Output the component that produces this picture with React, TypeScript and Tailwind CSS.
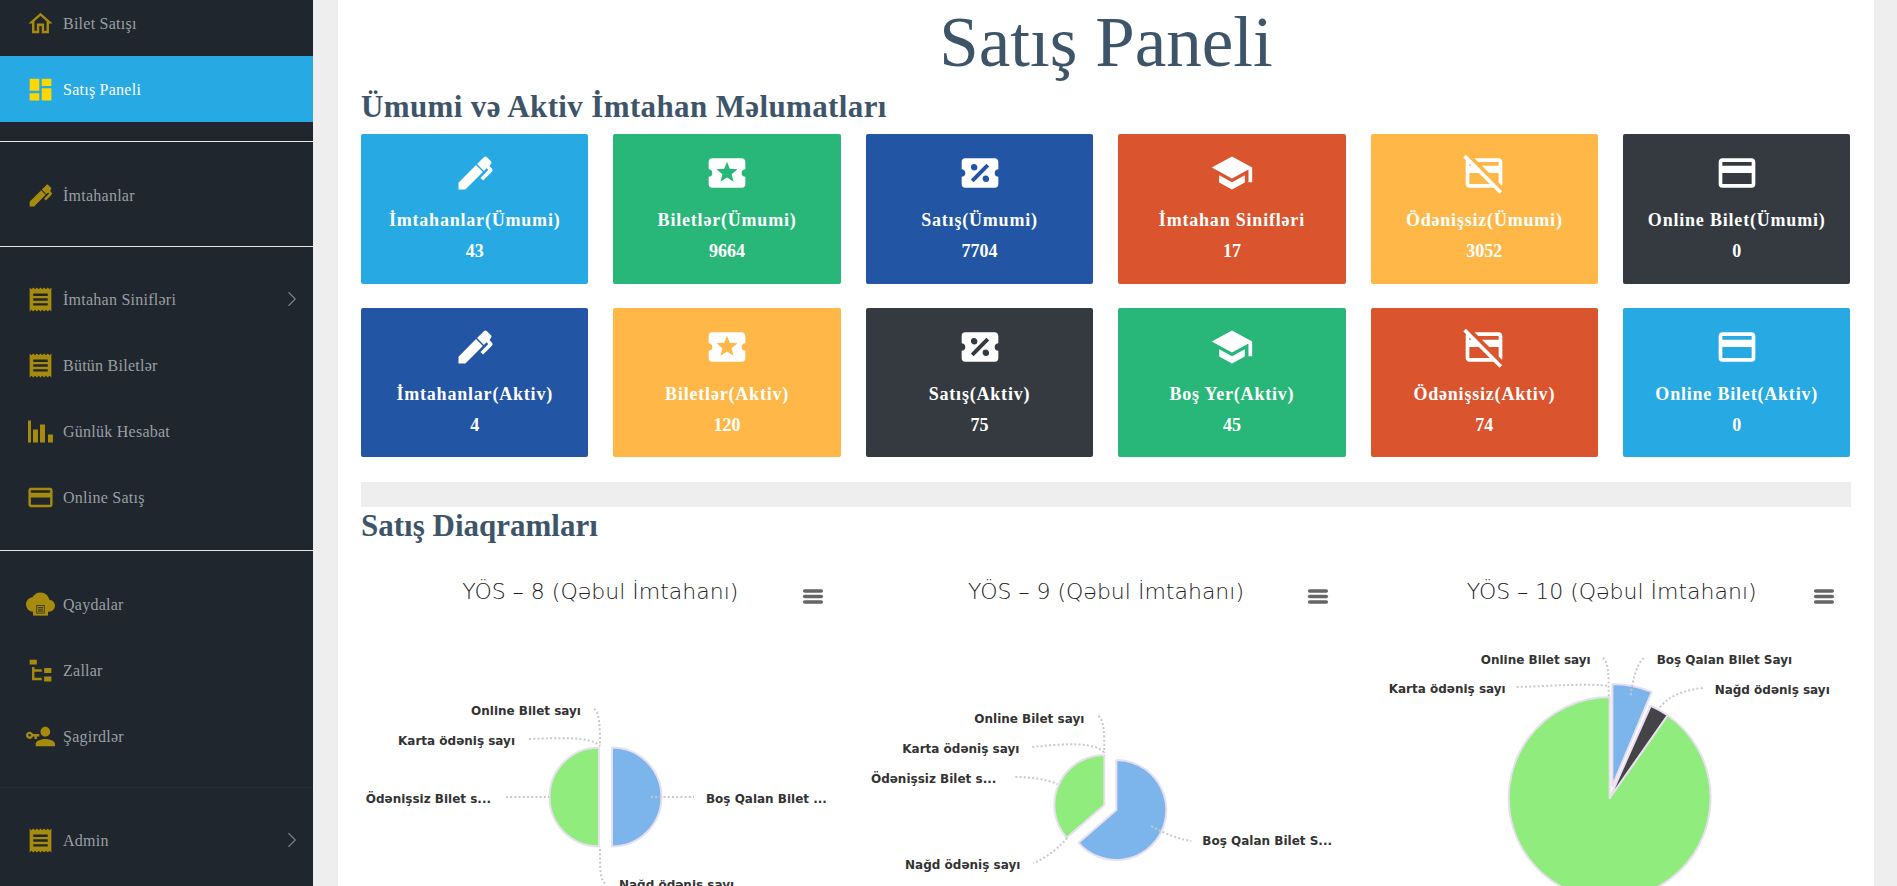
import type { ReactNode } from "react";
import { MdOutlineCreditCardOff } from "react-icons/md";
import { ChevronRight } from "lucide-react";

// mdi paths
const P = {
  home: "M12,5.69L17,10.19V18H15V12H9V18H7V10.19L12,5.69M12,3L2,12H5V20H11V14H13V20H19V12H22L12,3Z",
  dash: "M13,3V9H21V3M13,21H21V11H13M3,21H11V15H3M3,13H11V3H3V13Z",
  pen: "M20.71,7.04C20.37,7.38 20.04,7.71 20.03,8.04C20,8.36 20.34,8.69 20.66,9C21.14,9.5 21.61,9.95 21.59,10.44C21.57,10.93 21.06,11.44 20.55,11.94L16.42,16.08L15,14.66L19.25,10.42L18.29,9.46L16.87,10.87L13.12,7.12L16.96,3.29C17.35,2.9 18,2.9 18.37,3.29L20.71,5.63C21.1,6 21.1,6.65 20.71,7.04M3,17.25L12.56,7.68L16.31,11.43L6.75,21H3V17.25Z",
  receipt: "M3,22L4.5,20.5L6,22L7.5,20.5L9,22L10.5,20.5L12,22L13.5,20.5L15,22L16.5,20.5L18,22L19.5,20.5L21,22V2L19.5,3.5L18,2L16.5,3.5L15,2L13.5,3.5L12,2L10.5,3.5L9,2L7.5,3.5L6,2L4.5,3.5L3,2M18,9H6V7H18M18,13H6V11H18M18,17H6V15H18V17Z",
  card: "M20,8H4V6H20M20,18H4V12H20M20,4H4C2.89,4 2,4.89 2,6V18A2,2 0 0,0 4,20H20A2,2 0 0,0 22,18V6C22,4.89 21.1,4 20,4Z",
  tree: "M3,3H9V7H3V3M15,10H21V14H15V10M15,17H21V21H15V17M13,13H7V18H13V20H7L5,20V9H7V11H13V13Z",
  key: "M11 10V12H9V14H7V12H5.8C5.4 13.2 4.3 14 3 14C1.3 14 0 12.7 0 11S1.3 8 3 8C4.3 8 5.4 8.8 5.8 10H11M3 10C2.4 10 2 10.4 2 11S2.4 12 3 12 4 11.6 4 11 3.6 10 3 10M16 14C18.7 14 24 15.3 24 18V20H8V18C8 15.3 13.3 14 16 14M16 12C13.8 12 12 10.2 12 8S13.8 4 16 4 20 5.8 20 8 18.2 12 16 12Z",
  bars: "M1.65,2.9H4.1V21.1H1.65ZM5.8,10.3H9.9V21.1H5.8ZM11.6,6.2H15.7V21.1H11.6ZM18.2,14.5H22.3V21.1H18.2Z",
  cloud: "M19.35,10.04C18.67,6.59 15.64,4 12,4C9.11,4 6.6,5.64 5.35,8.04C2.34,8.36 0,10.91 0,14A6,6 0 0,0 6,20H4V20H20V20H19A5,5 0 0,0 24,15C24,12.36 21.95,10.22 19.35,10.04Z",
  star: "M15.58,16.8L12,14.5L8.42,16.8L9.5,12.68L6.21,10L10.46,9.74L12,5.8L13.54,9.74L17.79,10L14.5,12.68M20,12C20,10.89 20.9,10 22,10V6C22,4.89 21.1,4 20,4H4A2,2 0 0,0 2,6V10C3.11,10 4,10.9 4,12A2,2 0 0,1 2,14V18A2,2 0 0,0 4,20H20A2,2 0 0,0 22,18V14A2,2 0 0,1 20,12Z",
  percent: "M4,4A2,2 0 0,0 2,6V10C3.11,10 4,10.9 4,12A2,2 0 0,1 2,14V18A2,2 0 0,0 4,20H20A2,2 0 0,0 22,18V14A2,2 0 0,1 20,12C20,10.89 20.9,10 22,10V6C22,4.89 21.1,4 20,4H4M15.5,7L17,8.5L8.5,17L7,15.5L15.5,7M8.81,7.04C9.79,7.04 10.58,7.83 10.58,8.81A1.77,1.77 0 0,1 8.81,10.58C7.83,10.58 7.04,9.79 7.04,8.81A1.77,1.77 0 0,1 8.81,7.04M15.19,13.42C16.17,13.42 16.96,14.21 16.96,15.19A1.77,1.77 0 0,1 15.19,16.96C14.21,16.96 13.42,16.17 13.42,15.19A1.77,1.77 0 0,1 15.19,13.42Z",
  school: "M12,3L1,9L12,15L21,10.09V17H23V9M5,13.18V17.18L12,21L19,17.18V13.18L12,17L5,13.18Z",
};

function Icon({ d, className }: { d: string; className: string }) {
  return (
    <svg viewBox="0 0 24 24" className={className} fill="currentColor" fillRule="evenodd">
      <path d={d} />
    </svg>
  );
}

function CloudIcon({ className }: { className: string }) {
  return (
    <svg viewBox="0 0 24 24" className={className} fill="currentColor">
      <path d={P.cloud} transform="translate(0 -2)" />
      <rect x="5.8" y="15" width="12.4" height="6.2" />
      <rect x="8.6" y="12.4" width="6.8" height="7" fill="#1f262d" />
      <rect x="9.2" y="13" width="5.6" height="5.8" fill="#a68b0f" />
      <path d="M9.8 14h4.4v.7H9.8zM9.8 15.5h4.4v.7H9.8zM9.8 17h4.4v.7H9.8z" fill="#1f262d" />
    </svg>
  );
}

function NavRow({
  label,
  icon,
  active,
  chevron,
}: {
  label: string;
  icon: ReactNode;
  active?: boolean;
  chevron?: boolean;
}) {
  return (
    <div
      className={`flex h-[66px] items-center pr-[8px] pl-[26px] ${
        active ? "bg-[#27a9e3] text-white" : "text-[#9b9fa3]"
      }`}
    >
      <span className={`flex w-[29px] justify-center ${active ? "text-[#ffd700]" : "text-[#a68b0f]"}`}>{icon}</span>
      <span className="ml-[8px] flex-1 pt-[2px] text-[16px] font-light tracking-[0.25px]">{label}</span>
      {chevron && <ChevronRight className="size-[26px] text-[#7c8087]" strokeWidth={1} />}
    </div>
  );
}

function Sidebar() {
  const ic = "size-[29px] shrink-0";
  return (
    <aside className="-mt-[10px] w-[313px] shrink-0 bg-[#1f262d] font-['Liberation_Serif',serif]">
      <NavRow label="Bilet Satışı" icon={<Icon d={P.home} className={ic} />} />
      <NavRow label="Satış Paneli" active icon={<Icon d={P.dash} className={ic} />} />
      <hr className="mt-[19px] mb-[20px] border-t border-[#e8e8e8]" />
      <NavRow label="İmtahanlar" icon={<Icon d={P.pen} className={ic} />} />
      <hr className="mt-[18px] mb-[19px] border-t border-[#e8e8e8]" />
      <NavRow label="İmtahan Sinifləri" chevron icon={<Icon d={P.receipt} className={ic} />} />
      <NavRow label="Bütün Biletlər" icon={<Icon d={P.receipt} className={ic} />} />
      <NavRow label="Günlük Hesabat" icon={<Icon d={P.bars} className={ic} />} />
      <NavRow label="Online Satış" icon={<Icon d={P.card} className={ic} />} />
      <hr className="my-[20px] border-t border-[#e8e8e8]" />
      <NavRow label="Qaydalar" icon={<CloudIcon className={ic} />} />
      <NavRow label="Zallar" icon={<Icon d={P.tree} className={ic} />} />
      <NavRow label="Şagirdlər" icon={<Icon d={P.key} className={ic} />} />
      <hr className="mt-[18px] mb-[19px] border-t border-[#262d35]" />
      <NavRow label="Admin" chevron icon={<Icon d={P.receipt} className={ic} />} />
    </aside>
  );
}

const cardIcon = "size-[44px]";

const cards = [
  { t: "İmtahanlar(Ümumi)", v: "43", bg: "bg-[#27a9e3]", i: <Icon d={P.pen} className={cardIcon} /> },
  { t: "Biletlər(Ümumi)", v: "9664", bg: "bg-[#28b779]", i: <Icon d={P.star} className={cardIcon} /> },
  { t: "Satış(Ümumi)", v: "7704", bg: "bg-[#2255a4]", i: <Icon d={P.percent} className={cardIcon} /> },
  { t: "İmtahan Sinifləri", v: "17", bg: "bg-[#da542e]", i: <Icon d={P.school} className={cardIcon} /> },
  { t: "Ödənişsiz(Ümumi)", v: "3052", bg: "bg-[#ffb848]", i: <MdOutlineCreditCardOff className={cardIcon} /> },
  { t: "Online Bilet(Ümumi)", v: "0", bg: "bg-[#343a40]", i: <Icon d={P.card} className={cardIcon} /> },
  { t: "İmtahanlar(Aktiv)", v: "4", bg: "bg-[#2255a4]", i: <Icon d={P.pen} className={cardIcon} /> },
  { t: "Biletlər(Aktiv)", v: "120", bg: "bg-[#ffb848]", i: <Icon d={P.star} className={cardIcon} /> },
  { t: "Satış(Aktiv)", v: "75", bg: "bg-[#343a40]", i: <Icon d={P.percent} className={cardIcon} /> },
  { t: "Boş Yer(Aktiv)", v: "45", bg: "bg-[#28b779]", i: <Icon d={P.school} className={cardIcon} /> },
  { t: "Ödənişsiz(Aktiv)", v: "74", bg: "bg-[#da542e]", i: <MdOutlineCreditCardOff className={cardIcon} /> },
  { t: "Online Bilet(Aktiv)", v: "0", bg: "bg-[#27a9e3]", i: <Icon d={P.card} className={cardIcon} /> },
];

function wedge(cx: number, cy: number, r: number, a0: number, a1: number) {
  const pt = (a: number) => {
    const rad = (a * Math.PI) / 180;
    return `${cx + r * Math.sin(rad)} ${cy - r * Math.cos(rad)}`;
  };
  const large = a1 - a0 > 180 ? 1 : 0;
  return `M${cx} ${cy}L${pt(a0)}A${r} ${r} 0 ${large} 1 ${pt(a1)}Z`;
}

type Slice = { c: string; x: number; y: number; r: number; a0: number; a1: number };
type Label = { t: string; x: number; y: number; end?: boolean };

// coordinates are page pixels, each svg's viewBox starts at the chart's own corner
const charts: { title: string; x0: number; slices: Slice[]; labels: Label[]; lines: string[] }[] = [
  {
    title: "YÖS – 8 (Qəbul İmtahanı)",
    x0: 361,
    slices: [
      { c: "#7cb5ec", x: 612, y: 796, r: 49.5, a0: 0, a1: 180 },
      { c: "#90ed7d", x: 599, y: 796, r: 49.5, a0: 180, a1: 359.99 },
    ],
    labels: [
      { t: "Online Bilet sayı", x: 581, y: 714, end: true },
      { t: "Karta ödəniş sayı", x: 515, y: 744, end: true },
      { t: "Ödənişsiz Bilet s...", x: 491, y: 802, end: true },
      { t: "Boş Qalan Bilet ...", x: 706, y: 802 },
      { t: "Nağd ödəniş sayı", x: 619, y: 888 },
    ],
    lines: [
      "M594 708C600 710 600 730 600 745",
      "M529 738C560 737 590 735 600 745",
      "M506 796H549",
      "M651 796H694",
      "M600 848C600 870 600 878 606 884",
    ],
  },
  {
    title: "YÖS – 9 (Qəbul İmtahanı)",
    x0: 866.67,
    slices: [
      { c: "#7cb5ec", x: 1116, y: 809, r: 50, a0: 0, a1: 229 },
      { c: "#90ed7d", x: 1104, y: 804, r: 50, a0: 229, a1: 359.99 },
    ],
    labels: [
      { t: "Online Bilet sayı", x: 1084, y: 722, end: true },
      { t: "Karta ödəniş sayı", x: 1019, y: 752, end: true },
      { t: "Ödənişsiz Bilet s...", x: 996, y: 782, end: true },
      { t: "Boş Qalan Bilet S...", x: 1202, y: 844 },
      { t: "Nağd ödəniş sayı", x: 1020, y: 868, end: true },
    ],
    lines: [
      "M1098 715C1104 718 1104 735 1104 752",
      "M1032 746C1060 743 1095 740 1104 752",
      "M1015 776C1030 776 1045 778 1057 783",
      "M1151 825C1165 833 1178 838 1191 840",
      "M1067 837C1055 850 1045 857 1033 862",
    ],
  },
  {
    title: "YÖS – 10 (Qəbul İmtahanı)",
    x0: 1372.33,
    slices: [
      { c: "#90ed7d", x: 1610, y: 797, r: 101, a0: 35, a1: 359.99 },
      { c: "#434348", x: 1610, y: 797, r: 101, a0: 24, a1: 35 },
      { c: "#7cb5ec", x: 1612.7, y: 785, r: 102, a0: 0, a1: 22.7 },
    ],
    labels: [
      { t: "Online Bilet sayı", x: 1591, y: 663, end: true },
      { t: "Karta ödəniş sayı", x: 1506, y: 692, end: true },
      { t: "Boş Qalan Bilet Sayı", x: 1657, y: 663 },
      { t: "Nağd ödəniş sayı", x: 1715, y: 693 },
    ],
    lines: [
      "M1603 657C1609 660 1609 675 1609 695",
      "M1517 686C1550 685 1595 682 1609 685",
      "M1644 657C1636 665 1633 680 1631 695",
      "M1703 687C1685 689 1668 695 1660 707",
    ],
  },
];

function PieChart({ chart }: { chart: (typeof charts)[number] }) {
  return (
    <div className="relative h-[400px] min-w-0">
      <h3 className="pt-[8px] text-center font-['DejaVu_Sans',sans-serif] text-[22px] leading-[26px] font-extralight text-[#222222]">
        {chart.title}
      </h3>
      <svg
        aria-hidden
        viewBox="0 0 24 18"
        className="absolute top-[17px] right-[16px] h-[17px] w-[22px]"
        fill="#666666"
      >
        <rect x="1" y="1" width="22" height="4" rx="2" />
        <rect x="1" y="7" width="22" height="4" rx="2" />
        <rect x="1" y="13" width="22" height="4" rx="2" />
      </svg>
      <svg
        viewBox={`${chart.x0} 606 478.67 364`}
        className="absolute top-[36px] left-0 h-[364px] w-full"
      >
        {chart.slices.map((s, i) => (
          <path
            key={i}
            d={wedge(s.x, s.y, s.r, s.a0, s.a1)}
            fill={s.c}
            stroke="#e9dff0"
            strokeWidth={2}
            strokeLinejoin="round"
          />
        ))}
        {chart.lines.map((d, i) => (
          <path key={i} d={d} fill="none" stroke="#c8c8c8" strokeWidth={2} strokeDasharray="2 2.2" />
        ))}
        {chart.labels.map((l) => (
          <text
            key={l.t}
            x={l.x}
            y={l.y}
            textAnchor={l.end ? "end" : "start"}
            className="fill-[#333333] font-['DejaVu_Sans',sans-serif] text-[12px] font-semibold"
          >
            {l.t}
          </text>
        ))}
      </svg>
    </div>
  );
}

export default function App() {
  return (
    <div className="flex h-[886px] overflow-hidden bg-[#eeeeee]">
      <Sidebar />
      <main className="mr-[23px] ml-[25px] min-w-0 flex-1 bg-white px-[23px] font-['Liberation_Serif',serif]">
        <h1 className="pt-[4px] text-center text-[71px] leading-[76px] text-[#3e5569]">Satış Paneli</h1>
        <h2 className="mt-[9px] text-[31px] leading-[36px] font-bold tracking-[0.37px] text-[#3e5569]">
          Ümumi və Aktiv İmtahan Məlumatları
        </h2>
        <div className="mt-[9px] grid grid-cols-6 gap-x-[25px] gap-y-[24px] pr-[0.6px]">
          {cards.map((c) => (
            <div
              key={c.t}
              className={`flex h-[149.5px] flex-col items-center rounded-[2px] pt-[17px] text-white ${c.bg}`}
            >
              {c.i}
              <div className="mt-[13px] text-[18px] leading-[24px] font-bold tracking-[0.8px]">{c.t}</div>
              <div className="mt-[7px] text-[18px] leading-[24px] font-bold">{c.v}</div>
            </div>
          ))}
        </div>
        <div className="mt-[25px] h-[25px] bg-[#eeeeee]" />
        <h2 className="mt-[1px] text-[31px] leading-[36px] font-bold text-[#3e5569]">Satış Diaqramları</h2>
        <div className="mt-[27px] grid grid-cols-3 gap-x-[27px]">
          {charts.map((c) => (
            <PieChart key={c.title} chart={c} />
          ))}
        </div>
      </main>
    </div>
  );
}
